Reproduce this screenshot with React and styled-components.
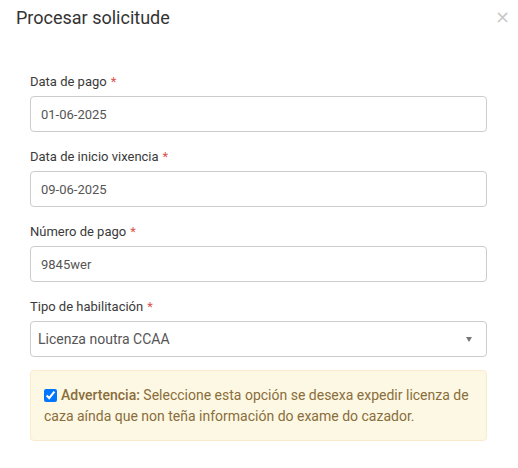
import React from "react";
import styled, { createGlobalStyle } from "styled-components";

const Global = createGlobalStyle`
  html, body { margin: 0; padding: 0; background: #fff; }
  body { font-family: Roboto, "Liberation Sans", Arial, sans-serif; }
  * { box-sizing: border-box; }
`;

const Modal = styled.div`
  width: 518px;
  background: #fff;
`;

const Header = styled.div`
  display: flex;
  align-items: flex-start;
  justify-content: space-between;
  padding: 6px 8px 0 16px;
  height: 58px;
`;

const Title = styled.h4`
  margin: 0;
  font-size: 18px;
  font-weight: 400;
  line-height: 24px;
  color: #333;
`;

const Close = styled.button`
  border: 0;
  background: none;
  padding: 0;
  margin-top: 2px;
  font-size: 18px;
  line-height: 18px;
  color: #c8c8c8;
  cursor: pointer;
  font-family: "DejaVu Sans", sans-serif;
`;

const Body = styled.div`
  padding: 15px 31px 20px 30px;
`;

const Group = styled.div`
  display: flex;
  flex-direction: column;
  margin-bottom: ${(p) => p.$mb ?? 16}px;
`;

const Label = styled.label`
  font-size: 13px;
  line-height: 18px;
  color: #3a3a3a;
  margin-bottom: 5px;
`;

const Req = styled.span`
  color: #d9534f;
  margin-left: 4px;
`;

const Input = styled.div`
  height: 36px;
  border: 1px solid #ccc;
  border-radius: 4px;
  padding: 0 ${(p) => (p.$select ? "14px 0 7px" : "10px")};
  display: flex;
  align-items: center;
  justify-content: space-between;
  font-size: ${(p) => (p.$select ? 14 : 13)}px;
  color: #555;
`;

const Caret = styled.span`
  width: 0;
  height: 0;
  border-left: 3.5px solid transparent;
  border-right: 3.5px solid transparent;
  border-top: 5px solid #777;
`;

const Alert = styled.div`
  background: #fcf8e3;
  border: 1px solid #faebcc;
  border-radius: 4px;
  color: #8a6d3b;
  font-size: 14px;
  line-height: 21px;
  padding: 14px 14px 13px 13px;
`;

const Check = styled.input`
  width: 13px;
  height: 13px;
  margin: 0 4px 0 0;
  vertical-align: -2px;
`;

const Strong = styled.strong`
  font-weight: 500;
`;

const fields = [
  { label: "Data de pago", value: "01-06-2025" },
  { label: "Data de inicio vixencia", value: "09-06-2025" },
  { label: "Número de pago", value: "9845wer" },
];

export default function App() {
  return (
    <>
      <Global />
      <Modal>
        <Header>
          <Title>Procesar solicitude</Title>
          <Close aria-label="close">×</Close>
        </Header>
        <Body>
          {fields.map((f) => (
            <Group key={f.label}>
              <Label>
                {f.label}
                <Req>*</Req>
              </Label>
              <Input>{f.value}</Input>
            </Group>
          ))}
          <Group $mb={13}>
            <Label>
              Tipo de habilitación
              <Req>*</Req>
            </Label>
            <Input $select>
              Licenza noutra CCAA
              <Caret />
            </Input>
          </Group>
          <Alert>
            <Check type="checkbox" defaultChecked />
            <Strong>Advertencia:</Strong> Seleccione esta opción se desexa expedir licenza de
            caza aínda que non teña información do exame do cazador.
          </Alert>
        </Body>
      </Modal>
    </>
  );
}
